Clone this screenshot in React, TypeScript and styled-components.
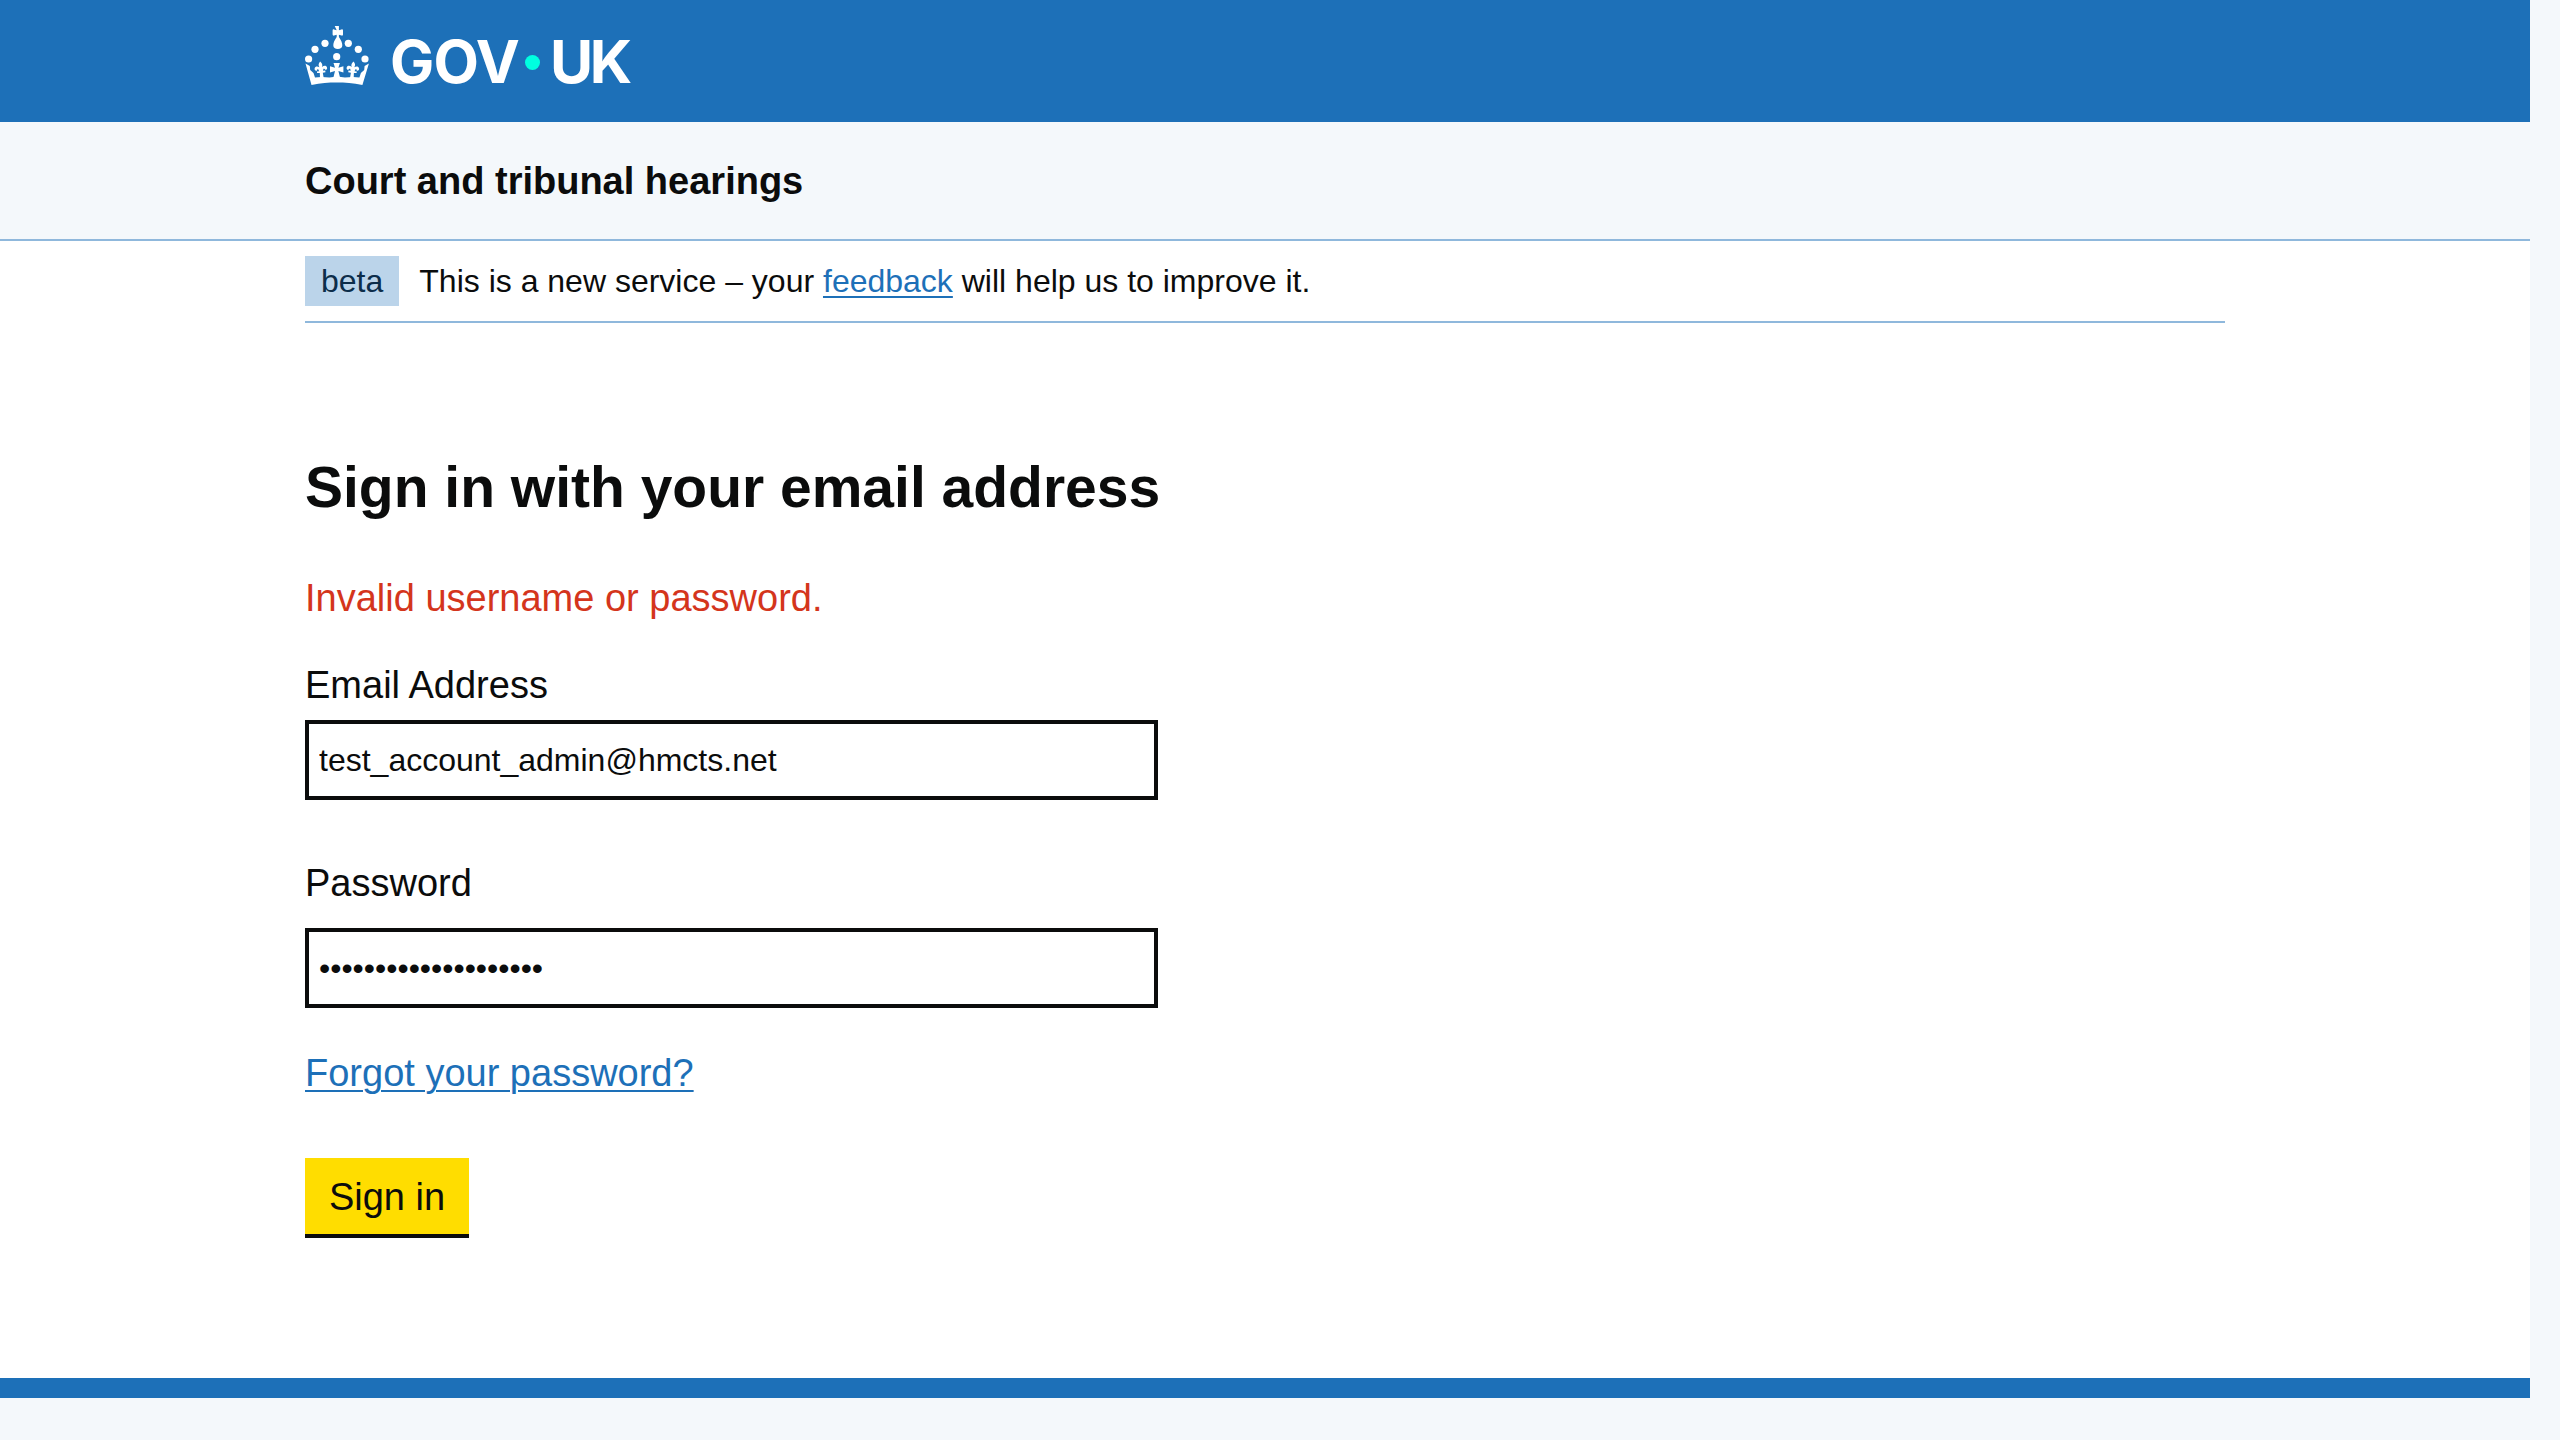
import React from "react";
import styled, { createGlobalStyle } from "styled-components";

const Global = createGlobalStyle`
  html, body { margin: 0; padding: 0; background: #f4f8fb; }
  body { font-family: "Liberation Sans", Arial, sans-serif; color: #0b0c0c; }
`;
const Page = styled.div`
  width: 2530px;
  height: 1440px;
  background: #fff;
  display: flex;
  flex-direction: column;
`;
const Masthead = styled.header`
  height: 122px;
  background: #1d70b8;
  flex: none;
`;
const Container = styled.div`
  width: 1920px;
  margin-left: 305px;
`;
const Logo = styled.div`
  display: flex;
  align-items: center;
  height: 124px;
  color: #fff;
  font-family: Inter, sans-serif;
  font-weight: 700;
  font-size: 59px;
`;
const Crown = styled.svg`
  width: 64px;
  height: 60px;
  margin-right: 21px;
  margin-top: -12px;
  flex: none;
`;
const LogoWord = styled.span<{ $tracking: number }>`
  line-height: 60px;
  letter-spacing: ${(p) => p.$tracking}px;
`;
const LogoDot = styled.span`
  width: 15px;
  height: 15px;
  border-radius: 50%;
  background: #00ffe0;
  margin: 0 10px 0 6px;
  flex: none;
`;
const ServiceBar = styled.div`
  height: 119px;
  box-sizing: border-box;
  background: #f4f8fb;
  border-bottom: 2px solid #8fb8dc;
  flex: none;
`;
const ServiceName = styled.div`
  font-size: 38px;
  font-weight: 700;
  line-height: 119px;
`;
const Phase = styled.div`
  display: flex;
  align-items: center;
  height: 82px;
  border-bottom: 2px solid #8fb8dc;
  box-sizing: border-box;
`;
const Tag = styled.span`
  background: #bbd4ea;
  color: #0c2d4a;
  font-size: 32px;
  line-height: 50px;
  height: 50px;
  padding: 0 16px;
  margin-right: 20px;
`;
const PhaseText = styled.span`
  font-size: 32px;
`;
const TextLink = styled.a`
  color: #1d70b8;
  text-decoration: underline;
  text-decoration-thickness: 2px;
  text-underline-offset: 4px;
`;
const Main = styled.main`
  width: 853px;
  padding-top: 132px;
`;
const Heading = styled.h1`
  font-size: 57px;
  line-height: 64px;
  font-weight: 700;
  margin: 0 0 55px;
  white-space: nowrap;
`;
const ErrorText = styled.p`
  color: #d4351c;
  font-size: 38px;
  line-height: 48px;
  margin: 0 0 38px;
`;
const Label = styled.label<{ $gap: number }>`
  display: block;
  font-size: 38px;
  line-height: 50px;
  margin-bottom: ${(p) => p.$gap}px;
`;
const Input = styled.input<{ $gap: number }>`
  display: block;
  box-sizing: border-box;
  width: 853px;
  height: 80px;
  border: 4px solid #0b0c0c;
  border-radius: 0;
  padding: 0 10px;
  font-family: "Liberation Sans", Arial, sans-serif;
  font-size: 32px;
  color: #0b0c0c;
  background: #fff;
  outline: none;
  margin-bottom: ${(p) => p.$gap}px;
`;
const ForgotLink = styled(TextLink)`
  display: block;
  font-size: 38px;
  line-height: 48px;
  margin-bottom: 61px;
`;
const SignIn = styled.button`
  display: block;
  background: #ffdd00;
  color: #0b0c0c;
  border: 0;
  border-radius: 0;
  box-shadow: 0 4px 0 #0b0c0c;
  font-family: "Liberation Sans", Arial, sans-serif;
  font-size: 38px;
  height: 76px;
  width: 164px;
  padding: 2px 0 0;
`;
const Footer = styled.footer`
  margin-top: auto;
  height: 62px;
  box-sizing: border-box;
  background: #f4f8fb;
  border-top: 20px solid #1d70b8;
  flex: none;
`;

const LILY =
  "M0-8.5c1.8 1.8 2.4 3.4 1.3 5.7 1.9-1.5 4.1-1.5 4.9.6.5 1.4-.6 2.8-2.1 2.4 0-.9-.7-1.3-1.5-1.1L1.9 1l2.3 0v1.7L1.5 2.9 1.9 9h-3.8l.4-6.1-2.7-.2V1l2.3 0-.7-1.9c-.8-.2-1.5.2-1.5 1.1-1.5.4-2.6-1-2.1-2.4.8-2.1 3-2.1 4.9-.6C-2.4-5.1-1.8-6.7 0-8.5z";

function CrownIcon() {
  return (
    <Crown viewBox="0 0 64 60" fill="#fff" aria-hidden="true">
      <path d="M29.7 0h4.2v4.2l2.6-.8c.9-.3 1.5.1 1.5 1v4.2c0 .9-.6 1.3-1.5 1l-2.6-.8v2.2c2.4 3.6 3.4 6 3.4 8.2 0 2.6-1.8 3.8-4.5 3.8s-4.5-1.2-4.5-3.8c0-2.2 1-4.6 3.4-8.2V8.800l-2.6.8c-.9.3-1.500-.1-1.500-1V4.400c0-.9.6-1.300 1.500-1l2.600.8z" />
      <circle cx="20" cy="17.300" r="3.600" />
      <circle cx="43.300" cy="17.300" r="3.600" />
      <circle cx="10" cy="23.300" r="3.600" />
      <circle cx="53.300" cy="23.300" r="3.600" />
      <circle cx="3.600" cy="33" r="3.600" />
      <circle cx="60" cy="33" r="3.600" />
      <circle cx="31.700" cy="30.700" r="3.600" />
      <path transform="translate(16 44) rotate(-6)" d={LILY} />
      <path d="M28.500 37h6.400l-1.500 4.700 5-1.500v6.400l-5-1.500 1.500 6h-6.400l1.500-6-5 1.500v-6.400l5 1.500z" />
      <path transform="translate(47.700 44) rotate(6)" d={LILY} />
      <path d="M0.500 37.500l4.300 2.500.4 4 3.300 3 1.500 4.500 6.500-.5 8 .5 7.700-1 7.700 1 8-.5 6.500.5 1.500-4.500 3.300-3 .4-4 4.300-2.500-6.500 21.500C48 57 40 56.500 31.700 56.500S16 57 6.500 59z" />
    </Crown>
  );
}

export default function App() {
  return (
    <Page>
      <Global />
      <Masthead>
        <Container>
          <Logo>
            <CrownIcon />
            <LogoWord $tracking={-0.8}>GOV</LogoWord>
            <LogoDot />
            <LogoWord $tracking={-3.5}>UK</LogoWord>
          </Logo>
        </Container>
      </Masthead>
      <ServiceBar>
        <Container>
          <ServiceName>Court and tribunal hearings</ServiceName>
        </Container>
      </ServiceBar>
      <Container>
        <Phase>
          <Tag>beta</Tag>
          <PhaseText>
            This is a new service – your <TextLink href="#">feedback</TextLink> will help us to improve it.
          </PhaseText>
        </Phase>
        <Main>
          <Heading>Sign in with your email address</Heading>
          <ErrorText>Invalid username or password.</ErrorText>
          <Label $gap={10}>Email Address</Label>
          <Input $gap={58} type="text" readOnly value="test_account_admin@hmcts.net" />
          <Label $gap={20}>Password</Label>
          <Input $gap={41} type="password" readOnly value="aaaaaaaaaaaaaaaaaaaa" />
          <ForgotLink href="#">Forgot your password?</ForgotLink>
          <SignIn type="button">Sign in</SignIn>
        </Main>
      </Container>
      <Footer />
    </Page>
  );
}
